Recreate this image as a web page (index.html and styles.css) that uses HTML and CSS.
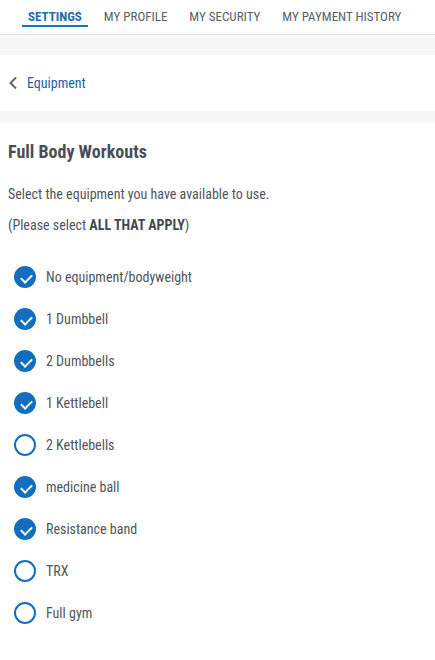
FILE: index.html
```html
<!DOCTYPE html>
<html>
<head>
<meta charset="utf-8">
<link rel="stylesheet" href="styles.css">
</head>
<body>
<nav class="tabs">
  <a class="tab active">SETTINGS</a>
  <a class="tab">MY PROFILE</a>
  <a class="tab">MY SECURITY</a>
  <a class="tab">MY PAYMENT HISTORY</a>
</nav>
<div class="band"></div>
<div class="back">
  <svg class="chev" width="10" height="14" viewBox="0 0 10 14"><path d="M8 1.5 L2.5 7 L8 12.5" fill="none" stroke="#5f6670" stroke-width="2"/></svg>
  <span>Equipment</span>
</div>
<div class="band small"></div>
<main class="content">
  <h1>Full Body Workouts</h1>
  <p class="desc">Select the equipment you have available to use.</p>
  <p class="desc">(Please select <b>ALL THAT APPLY</b>)</p>
  <ul class="list">
    <li class="on"><span class="box"></span>No equipment/bodyweight</li>
    <li class="on"><span class="box"></span>1 Dumbbell</li>
    <li class="on"><span class="box"></span>2 Dumbbells</li>
    <li class="on"><span class="box"></span>1 Kettlebell</li>
    <li><span class="box"></span>2 Kettlebells</li>
    <li class="on"><span class="box"></span>medicine ball</li>
    <li class="on"><span class="box"></span>Resistance band</li>
    <li><span class="box"></span>TRX</li>
    <li><span class="box"></span>Full gym</li>
  </ul>
</main>
</body>
</html>
```
FILE: styles.css
```css
* { box-sizing: border-box; }
body {
  margin: 0;
  font-family: "Roboto Condensed", Roboto, sans-serif;
  color: #50555c;
  background: #fff;
}
.tabs {
  display: flex;
  height: 35px;
  border-bottom: 1px solid #e3e3e3;
  padding-left: 22px;
}
.tab {
  font-size: 13px;
  color: #5a5f66;
  padding: 9px 6px 0;
  margin-right: 10px;
  height: 27px;
}
.tab.active {
  color: #1b6db5;
  font-weight: bold;
  border-bottom: 2px solid #1372c1;
}
.band { height: 20px; background: #f7f7f7; }
.band.small { height: 11px; }
.back {
  height: 56px;
  display: flex;
  align-items: center;
  padding-left: 8px;
  gap: 9px;
  font-size: 14px;
  color: #1a63a8;
}
.content { padding: 0 8px; }
h1 {
  margin: 0;
  padding-top: 19px;
  font-size: 18px;
  font-weight: bold;
  color: #4a4f56;
  line-height: 22px;
}
.desc {
  margin: 0;
  font-size: 14px;
  line-height: 20px;
  color: #50555c;
}
h1 + .desc { margin-top: 21px; }
.desc + .desc { margin-top: 11px; }
.desc b { color: #43484f; }
.list {
  list-style: none;
  margin: 21px 0 0;
  padding: 0;
}
.list li {
  display: flex;
  align-items: center;
  height: 42px;
  font-size: 14px;
  color: #50555c;
  gap: 10px;
  padding-left: 6px;
}
.box {
  width: 22px;
  height: 22px;
  border-radius: 50%;
  border: 2px solid #136fbd;
  flex: none;
  position: relative;
}
.on .box {
  background: #136fbd;
}
.on .box::after {
  content: "";
  position: absolute;
  left: 4px;
  top: 2.5px;
  width: 9px;
  height: 5px;
  border-left: 2.5px solid #fff;
  border-bottom: 2.5px solid #fff;
  transform: translate(1px, 3px) rotate(-45deg);
}
```
